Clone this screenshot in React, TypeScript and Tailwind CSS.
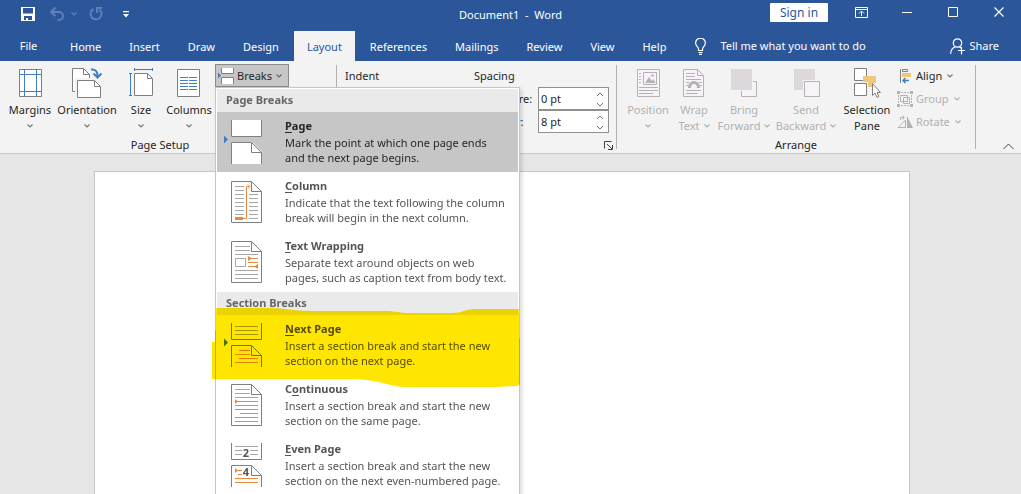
import type { ReactNode } from 'react';
import clsx from 'clsx';

const tabs = ['Home', 'Insert', 'Draw', 'Design', 'Layout', 'References', 'Mailings', 'Review', 'View', 'Help'];

const GRAY = '#7f7f7f';
const BLUE = '#3f7fbf';
const ORANGE = '#e8893c';
const OFF = '#b5b1b5';

function Caret({ className }: { className?: string }) {
  return (
    <svg width="6" height="4" viewBox="0 0 6 4" fill="none" stroke="currentColor" strokeWidth="1.2" className={clsx('shrink-0', className)}>
      <path d="M0.5 0.5 3 3 5.5 0.5" />
    </svg>
  );
}

function Icon({ children }: { children: ReactNode }) {
  return (
    <svg width="32" height="32" viewBox="0 0 32 32" fill="none" className="shrink-0">
      {children}
    </svg>
  );
}

function SmallIcon({ children }: { children: ReactNode }) {
  return (
    <svg width="16" height="16" viewBox="0 0 16 16" fill="none" className="shrink-0">
      {children}
    </svg>
  );
}

type BigButtonProps = {
  icon: ReactNode;
  label: string;
  second?: string;
  caret?: boolean;
  disabled?: boolean;
  className: string;
};

function BigButton({ icon, label, second, caret = true, disabled, className }: BigButtonProps) {
  return (
    <button
      type="button"
      disabled={disabled}
      className={clsx('flex shrink-0 flex-col items-center whitespace-nowrap', disabled ? 'text-[#b1b1b1]' : 'text-[#262626]', className)}
    >
      <Icon>{icon}</Icon>
      <span className="mt-[3px]">{label}</span>
      <span className="flex h-4 items-center gap-1">
        {second}
        {caret && <Caret className={disabled ? '' : 'text-[#777]'} />}
      </span>
    </button>
  );
}

function SmallButton({ icon, label, disabled }: { icon: ReactNode; label: string; disabled?: boolean }) {
  return (
    <button type="button" disabled={disabled} className={clsx('flex h-[23px] items-center gap-[3px]', disabled ? 'text-[#b1b1b1]' : 'text-[#262626]')}>
      <SmallIcon>{icon}</SmallIcon>
      {label}
      <Caret className={clsx('ml-[2px]', !disabled && 'text-[#777]')} />
    </button>
  );
}

function Spinner({ id, label, value }: { id: string; label: string; value: string }) {
  return (
    <div className="flex h-[23px] items-center justify-end">
      <label htmlFor={id} className="w-[43px]">{label}</label>
      <div className="flex h-[23px] w-[71px] border border-[#8f8f8f] bg-white">
        <input id={id} defaultValue={value} className="w-0 flex-1 px-[2px] outline-none" />
        <div className="flex w-4 flex-col items-center justify-around pt-px text-[#777]">
          <button type="button" aria-label={`Increase ${label}`}>
            <svg width="8" height="5" viewBox="0 0 8 5" fill="none" stroke="currentColor"><path d="M1 4 4 1 7 4" /></svg>
          </button>
          <button type="button" aria-label={`Decrease ${label}`}>
            <svg width="8" height="5" viewBox="0 0 8 5" fill="none" stroke="currentColor"><path d="M1 1 4 4 7 1" /></svg>
          </button>
        </div>
      </div>
    </div>
  );
}

function Separator() {
  return <div className="mb-1 mt-1 w-px shrink-0 bg-[#b1b1b1]" />;
}

// Menu artwork: 41x44, page outline starts at x = 8
const sheet = 'M8.5 1.5h20l10 10v31h-30z';
const fold = 'M28.5 1.5v10h10';

function PageArt() {
  return (
    <>
      <path d="M8 0h31v17H8zM8 22h21l10 10v12H8z" fill="#fff" />
      <path d="M8.5 0v16.5h30V0M8.5 44V22.5h20l10 10V44M28.5 22.5v10h10" stroke={GRAY} />
      <path d="m1 15.500 4 4-4 4z" fill={BLUE} />
    </>
  );
}

function ColumnArt() {
  return (
    <>
      <path d={sheet} stroke={GRAY} />
      <path d={fold} stroke={GRAY} />
      <path d="M12 6.500h9M12 10.500h9M12 14.500h9M12 18.500h9M12 22.500h9M12 26.500h9M12 30.500h9M12 34.500h9M26 14.500h9M26 18.500h9M26 22.500h9M26 26.500h9M26 30.500h9M26 34.500h9M26 38.500h9" stroke="#a6a6a6" />
      <path d="M12 37h8v3h-8z" fill={ORANGE} />
      <path d="M20 38.500h3.500V6.500H26M25 4.500l2 2-2 2" stroke={ORANGE} />
    </>
  );
}

function WrapArt() {
  return (
    <>
      <path d={sheet} stroke={GRAY} />
      <path d={fold} stroke={GRAY} />
      <path d="M12 6.500h15M12 10.500h15M12 14.500h23M12 30.500h23M12 34.500h23M12 38.500h23M12.500 18.500h10v8h-10z" stroke="#a6a6a6" />
      <path d="m25 16 4 2.500-4 2.500zM35 24l-4 2.500 4 2.500z" fill={ORANGE} />
      <path d="M28 18.500h7M25 22.500h10M25 26.500h7" stroke={ORANGE} />
    </>
  );
}

function NextArt() {
  return (
    <>
      <path d="M8.500 0v16.500h30V0M8.500 44V22.500h20l10 10V44M28.500 22.500v10h10" stroke={GRAY} />
      <path d="M12 3.500h23M12 7.500h23M12 11.500h23" stroke="#a6a6a6" />
      <path d="M16 27.500h11M12 31.500h15M16 35.500h19M12 39.500h23" stroke={ORANGE} />
      <path d="m1 15.500 4 4-4 4z" fill={BLUE} />
    </>
  );
}

function ContinuousArt() {
  return (
    <>
      <path d={sheet} stroke={GRAY} />
      <path d={fold} stroke={GRAY} />
      <path d="M12 6.500h15M12 10.500h15M12 14.500h23" stroke="#a6a6a6" />
      <path d="M14 18.500h21M12 22.500h23M12 26.500h23M17 30.500h18M12 34.500h23M12 38.500h23" stroke={ORANGE} />
      <path d="m12 16 3 2.500-3 2.500z" fill={ORANGE} />
    </>
  );
}

function EvenArt() {
  return (
    <>
      <path d="M8.500 0v16.500h30V0M8.500 44V22.500h20l10 10V44M28.500 22.500v10h10" stroke={GRAY} />
      <path d="M12 3.500h23M12 7.500h7M27 7.500h8M12 11.500h7M27 11.500h8" stroke="#a6a6a6" />
      <path d="M14 27.500h5M15 31.500h4M12 35.500h23M12 39.500h23" stroke={ORANGE} />
      <path d="m12 25 3 2.500-3 2.500z" fill={ORANGE} />
      <text x="23" y="14" textAnchor="middle" fontSize="11" fontWeight="700" fill="#555">2</text>
      <text x="23" y="33" textAnchor="middle" fontSize="11" fontWeight="700" fill="#555">4</text>
    </>
  );
}

type BreakItem = {
  pre?: string;
  accel: string;
  rest: string;
  lines: [string, string];
  art: ReactNode;
  active?: boolean;
  marked?: boolean;
};

const pageBreaks: BreakItem[] = [
  { accel: 'P', rest: 'age', lines: ['Mark the point at which one page ends', 'and the next page begins.'], art: <PageArt />, active: true },
  { accel: 'C', rest: 'olumn', lines: ['Indicate that the text following the column', 'break will begin in the next column.'], art: <ColumnArt /> },
  { accel: 'T', rest: 'ext Wrapping', lines: ['Separate text around objects on web', 'pages, such as caption text from body text.'], art: <WrapArt /> },
];

const sectionBreaks: BreakItem[] = [
  { accel: 'N', rest: 'ext Page', lines: ['Insert a section break and start the new', 'section on the next page.'], art: <NextArt />, marked: true },
  { pre: 'C', accel: 'o', rest: 'ntinuous', lines: ['Insert a section break and start the new', 'section on the same page.'], art: <ContinuousArt /> },
  { accel: 'E', rest: 'ven Page', lines: ['Insert a section break and start the new', 'section on the next even-numbered page.'], art: <EvenArt /> },
];

function Marker() {
  return (
    <svg width="310" height="80" viewBox="0 0 310 80" className="pointer-events-none absolute -left-[5px] -top-[7px] z-10 mix-blend-multiply">
      <path
        d="M4 0H58C75 0 80 3 98 3H172C184 3 187 5 197 5H240C252 5 252 1 264 1H307V30H308V75Q308 78 304 78L285 79H194C180 79 172 74 155 72 147 71 140 71 128 71H0V34H3V22H4Z"
        fill="#ffe600"
      />
    </svg>
  );
}

function MenuItem({ item }: { item: BreakItem }) {
  return (
    <li className="relative">
      <button type="button" className={clsx('flex h-[60px] w-full gap-[21px] pl-[6px] text-left', item.active ? 'bg-[#c6c6c6] text-[#262626]' : 'text-[#555]')}>
        <svg width="41" height="44" viewBox="0 0 41 44" fill="none" className="mt-2 shrink-0">
          {item.art}
        </svg>
        <span className="mt-[6px] whitespace-nowrap">
          <span className="block font-bold">
            {item.pre}
            <span className="underline underline-offset-2">{item.accel}</span>
            {item.rest}
          </span>
          <span className="mt-px block leading-[15px]">
            {item.lines[0]}
            <br />
            {item.lines[1]}
          </span>
        </span>
      </button>
      {item.marked && <Marker />}
    </li>
  );
}

function MenuHeading({ children }: { children: ReactNode }) {
  return <h2 className="h-[23px] bg-[#eaeaea] pl-[9px] font-bold leading-[22px] text-[#666]">{children}</h2>;
}

function BreaksMenu() {
  return (
    <div className="absolute left-0 top-full z-20 w-[305px] border border-[#c6c6c6] bg-white p-px shadow-[2px_2px_4px_rgba(0,0,0,0.15)]">
      <MenuHeading>Page Breaks</MenuHeading>
      <ul>{pageBreaks.map((item) => <MenuItem key={item.rest} item={item} />)}</ul>
      <MenuHeading>Section Breaks</MenuHeading>
      <ul>{sectionBreaks.map((item) => <MenuItem key={item.rest} item={item} />)}</ul>
    </div>
  );
}

function TitleBar() {
  return (
    <div className="grid h-[31px] grid-cols-[1fr_auto_1fr] items-start">
      <div className="flex h-7 items-center pl-[21px]">
        <button type="button" aria-label="Save">
          <svg width="14" height="14" viewBox="0 0 14 14" fill="#fff">
            <path fillRule="evenodd" d="M0 0h14v14H0zM2 1v5.500h10V1zM3 9v4h2v-2h2v2h4V9z" />
          </svg>
        </button>
        <button type="button" aria-label="Undo" disabled className="ml-[15px] text-[#5c80b9]">
          <svg width="14" height="14" viewBox="0 0 14 14" fill="none" stroke="currentColor" strokeWidth="2">
            <path d="M5.500 0.500 1 5l4.500 4M1.500 5H9a3.800 3.800 0 0 1 0 8H7.500" />
          </svg>
        </button>
        <Caret className="ml-[7px] text-[#5c80b9]" />
        <button type="button" aria-label="Redo" disabled className="ml-3 text-[#5c80b9]">
          <svg width="14" height="14" viewBox="0 0 14 14" fill="none" stroke="currentColor" strokeWidth="2">
            <path d="M4.500 2A5.500 5.500 0 1 0 10.500 2.600M8 6V1h5" />
          </svg>
        </button>
        <button type="button" aria-label="Customize Quick Access Toolbar" className="ml-5">
          <svg width="6" height="7" viewBox="0 0 6 7" fill="#fff"><path d="M0 0h6v1.200H0zM0 3h6L3 6.500z" /></svg>
        </button>
      </div>
      <h1 className="whitespace-pre leading-[30px]">Document1  -  Word</h1>
      <div className="flex justify-end">
        <button type="button" className="mr-[10px] mt-[3px] h-[19px] w-[58px] rounded-[1px] bg-white text-[12px] text-[#2b579a]">Sign in</button>
        <div className="-mr-px flex h-6 text-white">
          <button type="button" aria-label="Ribbon Display Options" className="flex w-[46px] items-center justify-center">
            <svg width="13" height="11" viewBox="0 0 13 11" fill="none" stroke="currentColor"><path d="M.5.500h12v10H.5zM.5 2.500h12M6.500 9V4.500M4 6.500 6.500 4 9 6.500" /></svg>
          </button>
          <button type="button" aria-label="Minimize" className="flex w-[46px] items-center justify-center">
            <svg width="10" height="10" viewBox="0 0 10 10" fill="none" stroke="currentColor"><path d="M0 5.500h10" /></svg>
          </button>
          <button type="button" aria-label="Maximize" className="flex w-[46px] items-center justify-center">
            <svg width="10" height="10" viewBox="0 0 10 10" fill="none" stroke="currentColor"><path d="M.5.500h9v9h-9z" /></svg>
          </button>
          <button type="button" aria-label="Close" className="flex w-[46px] items-center justify-center">
            <svg width="10" height="10" viewBox="0 0 10 10" fill="none" stroke="currentColor" strokeWidth="1.200"><path d="m.5.500 9 9M9.500.500l-9 9" /></svg>
          </button>
        </div>
      </div>
    </div>
  );
}

function TabBar() {
  return (
    <nav className="flex h-[30px] items-stretch whitespace-nowrap">
      <button type="button" className="w-[57px] shrink-0 pb-px">File</button>
      <div className="flex gap-[2px]">
        {tabs.map((tab) => (
          <button key={tab} type="button" className={clsx('px-[13px] pt-px', tab === 'Layout' && 'bg-[#f3f3f3] text-[#2b579a]')}>
            {tab}
          </button>
        ))}
      </div>
      <button type="button" className="ml-4 flex items-center gap-[14px]">
        <svg width="11" height="17" viewBox="0 0 11 17" fill="none" stroke="currentColor" strokeWidth="1.200">
          <path d="M3.500 12.500V11C3.500 9 .6 8 .6 5a4.900 4.900 0 0 1 9.800 0c0 3-2.900 4-2.900 6v1.500zM3.500 14.500h4M4 16.400h3" />
        </svg>
        Tell me what you want to do
      </button>
      <button type="button" className="ml-auto mr-[22px] flex items-center gap-1">
        <svg width="15" height="17" viewBox="0 0 15 17" fill="none" stroke="currentColor" strokeWidth="1.200">
          <circle cx="7.500" cy="5" r="4.200" />
          <path d="M.6 16c0-4 2-6 4.600-7.200M9.500 9l1.500 1M8 12.500h7M11.500 9v7.500" />
        </svg>
        Share
      </button>
    </nav>
  );
}

function Ribbon() {
  return (
    <section className="flex h-[93px] border-b border-[#c8c8c8] bg-[#f3f3f3] text-[#262626]">
      <div className="flex w-[336px] shrink-0 flex-col">
        <div className="flex h-[76px] pl-1">
          <BigButton
            className="w-[52px] pt-[6px]"
            label="Margins"
            icon={
              <>
                <path d="M5.500 2.500h22v27h-22z" fill="#fff" stroke={GRAY} />
                <path d="M10.500 3v26M22.500 3v26M6 7.500h21M6 24.500h21" stroke={BLUE} />
              </>
            }
          />
          <BigButton
            className="w-[62px] pt-[6px]"
            label="Orientation"
            icon={
              <>
                <path d="M1.500 1.500h11l6 6v17h-17z" fill="#fff" stroke={GRAY} />
                <path d="M12.500 1.500v6h6" stroke={GRAY} />
                <path d="M5.500 12.500h18l6 6v12h-24z" fill="#fff" stroke="#f3f3f3" strokeWidth="3" />
                <path d="M6.500 13.500h17l6 6v11h-23z" fill="#fff" stroke={GRAY} />
                <path d="M23.500 13.500v6h6" stroke={GRAY} />
                <path d="M20 2.500c4.500-.5 6.500 2 6.500 6.500M22.500 6.500l4 4 4-4" stroke={BLUE} strokeWidth="2" />
              </>
            }
          />
          <BigButton
            className="w-[46px] pt-[6px]"
            label="Size"
            icon={
              <>
                <path d="M9.500 6.500h13l5 5v17h-18z" fill="#fff" stroke={GRAY} />
                <path d="M22.500 6.500v5h5" stroke={GRAY} />
                <path d="M10 2.500h17M9.500 1v3M27.500 1v3M5.500 7v21M4 6.500h3M4 28.500h3" stroke={BLUE} />
              </>
            }
          />
          <BigButton
            className="w-[50px] pt-[6px]"
            label="Columns"
            icon={
              <>
                <path d="M4.500 2.500h22v27h-22z" fill="#fff" stroke={GRAY} />
                <path d="M7 10.500h8M7 13.500h8M7 16.500h8M7 19.500h8M7 22.500h8M16 10.500h8M16 13.500h8M16 16.500h8M16 19.500h8M16 22.500h8" stroke={BLUE} />
              </>
            }
          />
          <div className="relative ml-px mt-[3px] h-[23px]">
            <button type="button" aria-expanded="true" className="flex h-[23px] w-[74px] items-center gap-[3px] border border-[#8a8a8a] bg-[#c6c6c6] pl-[2px]">
              <SmallIcon>
                <path d="M3 0h13v6H3zM3 9h13v7H3z" fill="#fff" />
                <path d="M3.500 0v5.500h12V0M3.500 16V9.500h12V16" stroke={GRAY} />
                <path d="m0 4.500 3 3-3 3z" fill={BLUE} />
              </SmallIcon>
              Breaks
              <Caret className="ml-px text-[#666]" />
            </button>
            <BreaksMenu />
          </div>
        </div>
        <div className="w-80 text-center">Page Setup</div>
      </div>
      <Separator />
      <div className="flex w-[279px] shrink-0 flex-col pt-[3px]">
        <div className="flex h-[23px] items-center pl-2">
          <span className="w-[129px]">Indent</span>
          <span>Spacing</span>
        </div>
        <div className="pr-[7px]">
          <Spinner id="before" label="Before:" value="0 pt" />
          <Spinner id="after" label="After:" value="8 pt" />
        </div>
        <button type="button" aria-label="Paragraph Settings" className="ml-auto mr-[3px] mt-2">
          <svg width="9" height="9" viewBox="0 0 9 9" fill="none" stroke="#444"><path d="M.5 7.500v-7h7M3 3l5 5M8.500 4v4.500H4" /></svg>
        </button>
      </div>
      <Separator />
      <div className="flex w-[358px] shrink-0 flex-col">
        <div className="flex h-[76px] pl-[7px]">
          <BigButton
            disabled
            className="w-[48px] pt-[6px]"
            label="Position"
            icon={
              <>
                <path d="M5.500 2.500h22v27h-22z" fill="#f8f3f8" stroke={OFF} />
                <path d="M11.500 5.500h13v12h-13z" stroke={OFF} />
                <path d="m13 16 4-6 3 4 1.500-2 2 4z" fill={OFF} />
                <circle cx="20.500" cy="8.500" r="1.200" fill={OFF} />
                <path d="M7 6.500h2M7 9.500h2M7 12.500h2M7 15.500h2M7 20.500h19M7 23.500h19M7 26.500h14" stroke={OFF} />
              </>
            }
          />
          <BigButton
            disabled
            className="w-[44px] pt-[6px]"
            label="Wrap"
            second="Text"
            icon={
              <>
                <path d="M5.500 2.500h14l6 6v21h-20z" fill="#f8f3f8" stroke={OFF} />
                <path d="M19.500 2.500v6h6M8 6.500h9M8 9.500h9M8 12.500h15M8 15.500h3M21 15.500h3M8 18.500h2M22 18.500h2M8 23.500h15M8 26.500h12" stroke={OFF} />
                <path d="M11.500 21v-1a4.500 4.500 0 0 1 9 0v1" stroke={OFF} strokeWidth="3" />
              </>
            }
          />
          <BigButton
            disabled
            className="w-[56px] pt-[6px]"
            label="Bring"
            second="Forward"
            icon={
              <>
                <path d="M13.500 14.500h15v15h-15z" fill="#f8f3f8" stroke={OFF} />
                <path d="M2 1h23v23H2z" fill="#f3f3f3" />
                <path d="M3 2h21v21H3z" fill="#dcd8dc" />
              </>
            }
          />
          <BigButton
            disabled
            className="w-[68px] pt-[6px]"
            label="Send"
            second="Backward"
            icon={
              <>
                <path d="M4 2h21v21H4z" fill="#dcd8dc" />
                <path d="M13 13h18v18H13z" fill="#f3f3f3" />
                <path d="M14.500 14.500h15v15h-15z" fill="#f8f3f8" stroke={OFF} />
              </>
            }
          />
          <BigButton
            caret={false}
            className="w-[54px] pt-[6px]"
            label="Selection"
            second="Pane"
            icon={
              <>
                <path d="M3.500 1.500h12v12h-12zM3.500 16.500h12v12h-12z" fill="#fff" stroke={GRAY} />
                <path d="M12 9h13v7h-4v4h-4v-5h-5z" fill="#f0c67c" />
                <path d="M21.500 16.500v12l2.500-2.500 2 4.500 2-1-2-4h3.500z" fill="#fff" stroke={GRAY} />
              </>
            }
          />
          <div className="ml-[3px] pt-[3px]">
            <SmallButton
              label="Align"
              icon={
                <>
                  <path d="M3.500 1v14" stroke={GRAY} />
                  <path d="M5.500 1.500h5v2h-5z" stroke={GRAY} />
                  <path d="M5 5h9v4H5z" fill="#f0c67c" />
                  <path d="M12 12.500H6M8.500 10 6 12.500 8.500 15" stroke={BLUE} strokeWidth="1.500" />
                </>
              }
            />
            <SmallButton
              disabled
              label="Group"
              icon={
                <>
                  <path d="M1.500 4v8M14.500 4v8M4 1.500h8M4 14.500h8" stroke={OFF} strokeDasharray="2 1" />
                  <path d="M3.500 4.500h7v6h-7zM6.500 6.500h6v6h-6z" stroke={OFF} />
                  <path d="M0 0h3v3H0zM13 0h3v3h-3zM0 13h3v3H0zM13 13h3v3h-3z" fill={OFF} />
                </>
              }
            />
            <SmallButton
              disabled
              label="Rotate"
              icon={
                <>
                  <path d="M8.500 6v7.500H1z" stroke={OFF} />
                  <path d="M10 2v12h6z" fill={OFF} />
                  <path d="M3.500 6V3.500H7M5.500 1.500l2 2-2 2" stroke={OFF} />
                </>
              }
            />
          </div>
        </div>
        <div className="text-center">Arrange</div>
      </div>
      <Separator />
      <button type="button" aria-label="Collapse the Ribbon" className="mb-[3px] ml-auto mr-[7px] self-end">
        <svg width="11" height="7" viewBox="0 0 11 7" fill="none" stroke="#444"><path d="M.5 6 5.500 1l5 5" /></svg>
      </button>
    </section>
  );
}

export default function App() {
  return (
    <div className="flex h-screen flex-col overflow-hidden bg-[#e6e6e6] font-['Noto_Sans','Open_Sans',sans-serif] text-[11px] leading-4">
      <header className="bg-[#2b579a] text-white">
        <TitleBar />
        <TabBar />
      </header>
      <Ribbon />
      <main className="flex flex-1 justify-center pr-[18px] pt-[17px]">
        <article aria-label="Document page" className="w-[816px] border border-b-0 border-[#c6c6c6] bg-white" />
      </main>
    </div>
  );
}
